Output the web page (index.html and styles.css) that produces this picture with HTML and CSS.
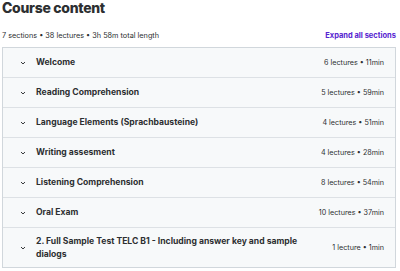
FILE: index.html
```html
<!DOCTYPE html>
<html lang="en">
<head>
    <meta charset="UTF-8">
    <meta name="viewport" content="width=device-width, initial-scale=1.0">
    <title>Course content</title>
    <link rel="stylesheet" href="styles.css">
</head>
<body>
    <div class="container">
        <h2 class="title">Course content</h2>
        <div class="meta">
            <span>7 sections • 38 lectures • 3h 58m total length</span>
            <button class="expand">Expand all sections</button>
        </div>

        <div class="sections">
            <div class="section">
                <svg class="chevron" viewBox="0 0 10 10"><path d="M2.5 3.8 L5 6.2 L7.5 3.8"/></svg>
                <span class="name">Welcome</span>
                <span class="info">6 lectures • 11min</span>
            </div>
            <div class="section">
                <svg class="chevron" viewBox="0 0 10 10"><path d="M2.5 3.8 L5 6.2 L7.5 3.8"/></svg>
                <span class="name">Reading Comprehension</span>
                <span class="info">5 lectures • 59min</span>
            </div>
            <div class="section">
                <svg class="chevron" viewBox="0 0 10 10"><path d="M2.5 3.8 L5 6.2 L7.5 3.8"/></svg>
                <span class="name">Language Elements (Sprachbausteine)</span>
                <span class="info">4 lectures • 51min</span>
            </div>
            <div class="section">
                <svg class="chevron" viewBox="0 0 10 10"><path d="M2.5 3.8 L5 6.2 L7.5 3.8"/></svg>
                <span class="name">Writing assesment</span>
                <span class="info">4 lectures • 28min</span>
            </div>
            <div class="section">
                <svg class="chevron" viewBox="0 0 10 10"><path d="M2.5 3.8 L5 6.2 L7.5 3.8"/></svg>
                <span class="name">Listening Comprehension</span>
                <span class="info">8 lectures • 54min</span>
            </div>
            <div class="section">
                <svg class="chevron" viewBox="0 0 10 10"><path d="M2.5 3.8 L5 6.2 L7.5 3.8"/></svg>
                <span class="name">Oral Exam</span>
                <span class="info">10 lectures • 37min</span>
            </div>
            <div class="section">
                <svg class="chevron" viewBox="0 0 10 10"><path d="M2.5 3.8 L5 6.2 L7.5 3.8"/></svg>
                <span class="name">2. Full Sample Test TELC B1 - Including answer key and sample dialogs</span>
                <span class="info">1 lecture • 1min</span>
            </div>
        </div>
    </div>
</body>
</html>
```

FILE: styles.css
```css
body {
    margin: 0;
    font-family: Inter, "Noto Sans", sans-serif;
    color: #2d2f31;
    background: white;
}
.container {
    padding: 0 4px 0 2px;
}
.title {
    margin: 0;
    font-size: 14px;
    line-height: 16px;
    font-weight: 800;
    letter-spacing: -0.3px;
}
.meta {
    display: flex;
    justify-content: space-between;
    align-items: center;
    margin-top: 12px;
    height: 14px;
    font-size: 7.3px;
    color: #2d2f31;
}
.expand {
    border: none;
    background: none;
    padding: 0;
    font-family: inherit;
    font-size: 7.5px;
    font-weight: 700;
    color: #5624d0;
    cursor: pointer;
}
.sections {
    margin-top: 5px;
    border: 1px solid #d1d7dc;
}
.section {
    display: flex;
    align-items: center;
    min-height: 29px;
    padding: 0 11px 0 16px;
    background: #f7f9fa;
    border-bottom: 1px solid #dde1e5;
}
.section:last-child {
    border-bottom: none;
    min-height: 39px;
}
.chevron {
    width: 8px;
    height: 8px;
    flex: none;
    fill: none;
    stroke: #2d2f31;
    stroke-width: 1.2;
    margin-right: 9px;
}
.name {
    flex: 1;
    font-size: 8.6px;
    font-weight: 700;
    line-height: 13px;
    padding-right: 22px;
}
.info {
    flex: none;
    font-size: 7.2px;
    color: #2d2f31;
}
```
